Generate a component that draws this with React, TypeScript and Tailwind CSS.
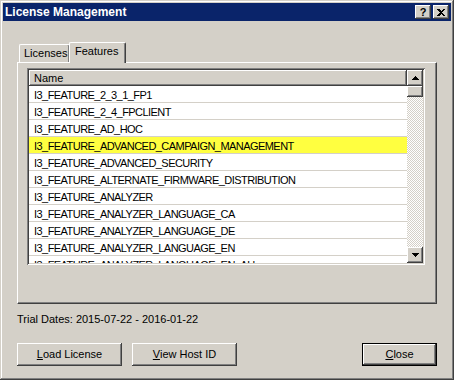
import React from 'react';

const rows = [
  'I3_FEATURE_2_3_1_FP1',
  'I3_FEATURE_2_4_FPCLIENT',
  'I3_FEATURE_AD_HOC',
  'I3_FEATURE_ADVANCED_CAMPAIGN_MANAGEMENT',
  'I3_FEATURE_ADVANCED_SECURITY',
  'I3_FEATURE_ALTERNATE_FIRMWARE_DISTRIBUTION',
  'I3_FEATURE_ANALYZER',
  'I3_FEATURE_ANALYZER_LANGUAGE_CA',
  'I3_FEATURE_ANALYZER_LANGUAGE_DE',
  'I3_FEATURE_ANALYZER_LANGUAGE_EN',
  'I3_FEATURE_ANALYZER_LANGUAGE_EN_AU',
];

const raised =
  'bg-[#d4d0c8] shadow-[inset_-1px_-1px_#404040,inset_1px_1px_#ffffff,inset_-2px_-2px_#808080,inset_2px_2px_#d4d0c8]';

function Arrow({ up }: { up?: boolean }) {
  return (
    <svg width="7" height="4" viewBox="0 0 7 4" shapeRendering="crispEdges">
      <path d={up ? 'M3 0h1v1h1v1h1v1h1v1H0V3h1V2h1V1h1z' : 'M0 0h7v1H6v1H5v1H4v1H3V3H2V2H1V1H0z'} fill="#000" />
    </svg>
  );
}

function Button({ children, className = '', isDefault }: { children: React.ReactNode; className?: string; isDefault?: boolean }) {
  if (isDefault) {
    return (
      <div className={`h-[23px] border border-black ${className}`}>
        <div className={`h-full flex items-center justify-center ${raised}`}>{children}</div>
      </div>
    );
  }
  return <div className={`h-[23px] flex items-center justify-center ${raised} ${className}`}>{children}</div>;
}

export default function App() {
  return (
    <div className="w-[454px] h-[380px] p-[3px] flex flex-col bg-[#d4d0c8] text-[11px] text-black font-['Liberation_Sans',Arial,sans-serif] shadow-[inset_-1px_-1px_#404040,inset_1px_1px_#d4d0c8,inset_-2px_-2px_#808080,inset_2px_2px_#ffffff]">
      {/* Title bar */}
      <div className="h-[18px] bg-[#0a246a] flex items-center pl-[2px] pr-[2px]">
        <span className="text-white font-bold text-[12px] leading-none">License Management</span>
        <div className="ml-auto flex gap-[2px]">
          <div className={`w-[16px] h-[14px] flex items-center justify-center ${raised}`}>
            <span className="font-bold text-[11px] leading-none pt-px">?</span>
          </div>
          <div className={`w-[16px] h-[14px] flex items-center justify-center ${raised}`}>
            <svg width="8" height="7" viewBox="0 0 8 7" shapeRendering="crispEdges">
              <path d="M0 0h2l2 2 2-2h2L5 3.5 8 7H6L4 5 2 7H0l3-3.5z" fill="#000" />
            </svg>
          </div>
        </div>
      </div>

      <div className="flex-1 px-[14px] pt-[21px] flex flex-col">
        {/* Tabs */}
        <div className="h-[20px] flex items-end pl-[2px] relative z-10">
          <div className="w-[51px] h-[18px] border-t border-l border-white border-r border-r-[#404040] rounded-tl-[2px] rounded-tr-[2px] shadow-[inset_-1px_0_#808080] pl-[4px] pt-[2px] leading-[13px]">
            Licenses
          </div>
          <div className="w-[57px] h-[21px] -mb-px -ml-[1px] bg-[#d4d0c8] border-t border-l border-white border-r border-r-[#404040] rounded-tl-[2px] rounded-tr-[2px] shadow-[inset_-1px_0_#808080] pl-[5px] pt-[2px] leading-[13px]">
            Features
          </div>
        </div>

        {/* Pane */}
        <div className="w-[420px] h-[242px] border-t border-l border-white border-r border-b border-r-[#404040] border-b-[#404040] shadow-[inset_-1px_-1px_#808080] pl-[9px] pt-[5px]">
          <div className="w-[398px] h-[197px] p-[2px] flex bg-white shadow-[inset_1px_1px_#808080,inset_-1px_-1px_#ffffff,inset_2px_2px_#404040,inset_-2px_-2px_#d4d0c8]">
            <div className="flex-1 flex flex-col overflow-hidden">
              <div className={`h-[16px] shrink-0 flex items-center pl-[5px] pt-px ${raised}`}>Name</div>
              {rows.map((r, i) => (
                <div
                  key={r}
                  className={`h-[17px] shrink-0 border-b border-[#d4d0c8] flex items-center pl-[5px] pt-[2px] tracking-[-0.55px] whitespace-nowrap ${i === 3 ? 'bg-[#ffff40]' : ''}`}
                >
                  {r}
                </div>
              ))}
            </div>
            {/* Scrollbar */}
            <div className="w-[16px] flex flex-col">
              <div className={`h-[16px] flex items-center justify-center ${raised}`}>
                <Arrow up />
              </div>
              <div className={`h-[11px] ${raised}`} />
              <div className="flex-1 bg-[image:repeating-conic-gradient(#ffffff_0_25%,#d4d0c8_0_50%)] bg-[length:2px_2px]" />
              <div className={`h-[16px] flex items-center justify-center ${raised}`}>
                <Arrow />
              </div>
            </div>
          </div>
        </div>

        <div className="mt-[9px] leading-[13px]">Trial Dates: 2015-07-22 - 2016-01-22</div>

        <div className="mt-[17px] flex">
          <Button className="w-[105px]">
            <span><span className="underline">L</span>oad License</span>
          </Button>
          <Button className="w-[105px] ml-[10px]">
            <span><span className="underline">V</span>iew Host ID</span>
          </Button>
          <Button className="w-[75px] ml-auto" isDefault>
            <span><span className="underline">C</span>lose</span>
          </Button>
        </div>
      </div>
    </div>
  );
}
